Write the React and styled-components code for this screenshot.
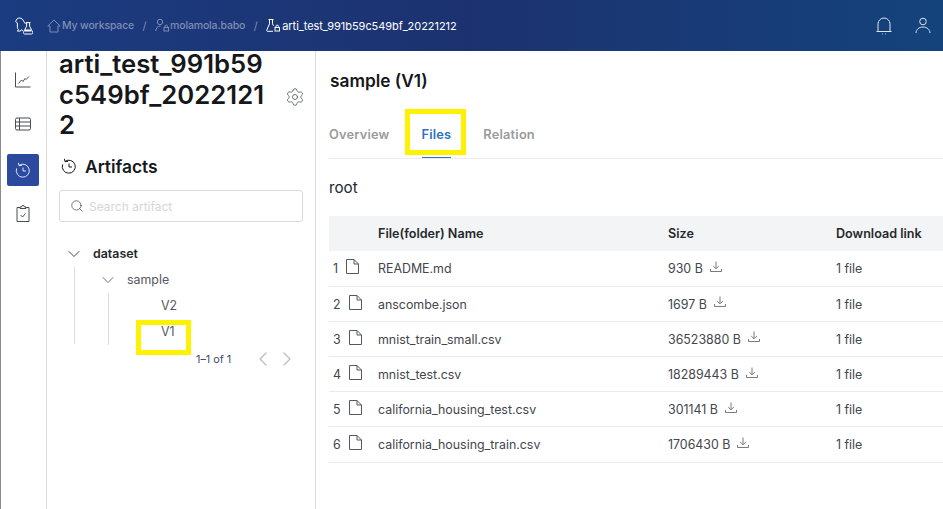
import React from "react";
import styled, { createGlobalStyle } from "styled-components";
import { ChevronDown, ChevronLeft, ChevronRight, Search, Settings } from "lucide-react";

const Global = createGlobalStyle`
  html, body { margin: 0; padding: 0; background: #fff; }
  body { font-family: Inter, "Noto Sans", sans-serif; color: #16171a; }
  * { box-sizing: border-box; }
`;

const Page = styled.div`
  width: 943px; height: 509px; overflow: hidden; display: flex; flex-direction: column; background: #fff;
`;
const Header = styled.header`
  height: 51px; flex: none; display: flex; align-items: center; padding: 0 12px 0 15px;
  background: linear-gradient(90deg, #1b3c80 0%, #1c3270 50%, #14437c 100%);
`;
const Crumbs = styled.nav`
  display: flex; align-items: center; margin-left: 14px; flex: 1;
`;
const Crumb = styled.span`
  display: flex; align-items: center; gap: ${p => (p.$current ? "2px" : "1px")}; color: ${p => (p.$current ? "#fff" : "#7f8db3")};
  font-weight: ${p => (p.$current ? 400 : 500)}; font-size: ${p => (p.$current ? "11px" : "10.5px")};
  letter-spacing: ${p => (p.$current ? "-0.05px" : "-0.15px")};
`;
const Sep = styled.span`
  color: #7f8db3; margin: 0 8.5px; font-size: 11px;
`;
const HeaderIcons = styled.div`
  display: flex; align-items: center; gap: 23px; color: #dfe4ee;
`;
const Body = styled.div`
  flex: 1; display: flex; min-height: 0; border-left: 1px solid #8b8b8b;
`;
const Rail = styled.aside`
  width: 46px; flex: none; border-right: 1px solid #dcdcdc; display: flex; flex-direction: column; align-items: center; padding: 13px 1px 0 0; gap: 12px;
`;
const RailButton = styled.div`
  width: 32px; height: 32px; border-radius: 2px; display: flex; align-items: center; justify-content: center;
  color: ${p => (p.$active ? "#dfe6f5" : "#4a4d55")}; background: ${p => (p.$active ? "#2b4a9f" : "transparent")};
  ${p => p.$active && `margin: 2px 0 -1px;`}
`;
const Side = styled.section`
  width: 269px; flex: none; border-right: 1px solid #dcdcdc; padding: 0 12px; position: relative;
`;
const TitleRow = styled.div`
  display: flex; align-items: center; justify-content: space-between; margin-top: -2px;
`;
const Title = styled.h1`
  margin: 0; width: 212px; font-size: 25.7px; line-height: 30.7px; font-weight: 600; word-break: break-all; color: #16171a;
`;
const GearWrap = styled.div`
  color: #55585f; display: flex; margin: 4px -2px 0 0;
`;
const SectionHead = styled.div`
  display: flex; align-items: center; gap: 8px; margin-top: 13px; padding-left: 2px; font-size: 17.4px; font-weight: 600; height: 24px;
`;
const SearchBox = styled.div`
  margin-top: 12px; height: 32px; width: 244px; border: 1px solid #d9d9d9; border-radius: 3px; display: flex; align-items: center; padding: 0 10px; gap: 5px; color: #40434a;
`;
const SearchText = styled.span`
  font-size: 12px; color: #d6d6d6;
`;
const Tree = styled.ul`
  list-style: none; margin: 19px 0 0; padding: 0; position: relative; font-size: 12.4px;
`;
const TreeRow = styled.li`
  height: 25.7px; display: flex; align-items: center; padding-left: ${p => p.$indent}px; gap: ${p => p.$gap || 8}px;
  color: ${p => p.$color || "#55585f"}; font-weight: ${p => p.$bold ? 600 : 400};
`;
const Guide = styled.span`
  position: absolute; width: 1px; background: #dcdcdc; left: ${p => p.$left}px; top: ${p => p.$top}px; height: ${p => p.$h}px;
`;
const Pager = styled.div`
  display: flex; align-items: center; position: absolute; left: 149px; top: 296px; height: 24px; font-size: 10.8px; color: #3b4a6b;
`;
const PagerArrows = styled.div`
  display: flex; gap: 0; margin-left: 20px; color: #bdbdbd; align-items: center;
`;
const Main = styled.main`
  flex: 1; min-width: 0; padding: 0 0 0 13px; position: relative; overflow: hidden;
`;
const MainTitle = styled.h2`
  margin: 19px 0 0 1px; font-size: 17.3px; line-height: 22px; font-weight: 600;
`;
const Tabs = styled.div`
  margin-top: 22px; height: 45px; border-bottom: 1px solid #ebebeb; display: flex; gap: 32px; width: 700px;
`;
const Tab = styled.div`
  font-size: 12.8px; font-weight: 600; padding-top: 13px; position: relative; letter-spacing: 0.2px;
  color: ${p => (p.$active ? "#2f6fc4" : "#9a9a9a")};
  ${p => p.$active && `border-bottom: 1px solid #2f6fc4;`}
`;
const Root = styled.div`
  margin-top: 19px; height: 20px; font-size: 15.2px; line-height: 20px; color: #26282d;
`;
const Table = styled.div`
  margin-top: 18.4px; width: 700px; font-size: 12.4px;
`;
const HeadRow = styled.div`
  height: 35px; background: #f3f4f6; display: grid; grid-template-columns: 49px 290px 168px 1fr; align-items: center; font-weight: 600; color: #26282d; font-size: 12.6px;
`;
const Row = styled.div`
  height: 35.2px; padding-top: 1px; border-bottom: 1px solid #ebebeb; display: grid; grid-template-columns: 49px 290px 168px 1fr; align-items: center; color: #43464d;
`;
const IndexCell = styled.div`
  display: flex; align-items: center; gap: 8px; padding-left: 4px; color: #43464d;
`;
const FileIcon = styled.svg`
  margin-top: -4px; color: #55585f;
`;
const SizeCell = styled.div`
  display: flex; align-items: center; gap: 7px;
`;
const DlIcon = styled.svg`
  color: #7a7a7a; margin-top: -4px;
`;
const Highlight = styled.div`
  position: absolute; border: 5px solid #fff200; pointer-events: none;
  left: ${p => p.$x}px; top: ${p => p.$y}px; width: ${p => p.$w}px; height: ${p => p.$h}px;
`;

const Logo = () => (
  <svg width="18" height="18" viewBox="0 0 18 18" fill="none" stroke="#fff" strokeWidth="1">
    <path d="M.8 4.500C1 2.300 2.600 1 4.500 1c2.200 0 3.400 1.400 4.300 3.400.5 1 1 1.800 1.600 2.400M.8 4.500c.2 1 .9 1.300 1.600 1.400M2.400 6v4.300c0 1.100.4 1.800 1 2.200l-1 1.600h3l1-1.400 1.500 1.200" />
    <path d="M10.600 5.600h4.800M11.600 5.600v3.600L8.600 15c-.4.900 0 2 1 2h7c1 0 1.400-1.100 1-2l-3-5.800V5.600" />
    <path d="M9.800 13.500h6.400" strokeWidth="2" />
  </svg>
);
const Home = () => (
  <svg width="14" height="14" viewBox="0 0 14 14" fill="none" stroke="#7f8db3" strokeWidth="1">
    <path d="M7 1 .8 7h2.200v6h8V7h2.200z" />
  </svg>
);
const Lock = () => (
  <>
    <rect x="9" y="9.500" width="4.500" height="3.500" />
    <path d="M10 9.500V8.300a1.200 1.200 0 0 1 2.400 0v1.200" />
  </>
);
const FlaskLock = () => (
  <svg width="14" height="15" viewBox="0 0 14 15" fill="none" stroke="#fff" strokeWidth="1">
    <path d="M2.500 1.500h5M3.500 1.500v4.300L.8 12c-.3.700 0 1.300.7 1.300h5.500M6.500 1.500v4.300l1 2" />
    <Lock />
  </svg>
);
const UserLock = () => (
  <svg width="14" height="15" viewBox="0 0 14 15" fill="none" stroke="#7f8db3" strokeWidth="1">
    <circle cx="5" cy="4" r="2.700" />
    <path d="M.8 13c0-2.800 1.800-5 4.700-5" />
    <Lock />
  </svg>
);
const BellIcon = () => (
  <svg width="16" height="18" viewBox="0 0 16 18" fill="none" stroke="currentColor" strokeWidth="1">
    <path d="M2 14V7a6 6 0 0 1 12 0v7" />
    <path d="M.5 14.500h15" />
    <path d="M6.500 16.500v1M9.500 16.500v1" strokeWidth=".8" />
  </svg>
);
const UserIcon = () => (
  <svg width="16" height="17" viewBox="0 0 16 17" fill="none" stroke="currentColor" strokeWidth="1">
    <circle cx="8" cy="4.500" r="3.300" />
    <path d="M1 16c.3-3.600 3-6 7-6s6.700 2.400 7 6" />
  </svg>
);
const ChartIcon = () => (
  <svg width="16" height="16" viewBox="0 0 16 16" fill="none" stroke="currentColor" strokeWidth="1">
    <path d="M.5.500v14.500h15" />
    <path d="M3.500 11.500l3-3.500 1.500 1.500 2-3 1 1 3-3" />
  </svg>
);
const TableIcon = () => (
  <svg width="16" height="14" viewBox="0 0 16 14" fill="none" stroke="currentColor" strokeWidth="1">
    <rect x=".5" y="1" width="15" height="12" rx="1.500" />
    <path d="M.5 5h15M.5 9h15M4.500 1v12" />
  </svg>
);
const ClockIcon = ({ size = 16 }) => (
  <svg width={size} height={size} viewBox="0 0 16 16" fill="none" stroke="currentColor" strokeWidth="1">
    <path d="M4 3.400a6.500 6.500 0 1 1-2.300 3" />
    <path d="M3.400.8 4 3.700l3-.4" />
    <path d="M8 5.500V9h3" />
  </svg>
);
const ClipIcon = () => (
  <svg width="14" height="17" viewBox="0 0 14 17" fill="none" stroke="currentColor" strokeWidth="1">
    <path d="M4 2.500H1v14h12v-14h-3" />
    <path d="M4 3.500v-1.500h1.500a1.500 1.500 0 0 1 3 0H10v1.500z" />
    <path d="M4.500 10l2 2 3-3.500" />
  </svg>
);
const DocIcon = () => (
  <FileIcon width="13" height="15" viewBox="0 0 13 15" fill="none" stroke="currentColor" strokeWidth="1">
    <path d="M.5.500h7.500l4.500 4.500v9.500H.5z" />
    <path d="M8 .5V5h4.500" />
  </FileIcon>
);
const DownIcon = () => (
  <DlIcon width="12" height="12" viewBox="0 0 12 12" fill="none" stroke="currentColor" strokeWidth="1">
    <path d="M6 .5v7M3.200 5 6 7.800 8.800 5" />
    <path d="M.5 8v2.500h11V8" />
  </DlIcon>
);

const files = [
  ["README.md", "930 B"],
  ["anscombe.json", "1697 B"],
  ["mnist_train_small.csv", "36523880 B"],
  ["mnist_test.csv", "18289443 B"],
  ["california_housing_test.csv", "301141 B"],
  ["california_housing_train.csv", "1706430 B"],
];

export default function App() {
  return (
    <Page>
      <Global />
      <Header>
        <Logo />
        <Crumbs>
          <Crumb><Home />My workspace</Crumb>
          <Sep>/</Sep>
          <Crumb><UserLock />molamola.babo</Crumb>
          <Sep>/</Sep>
          <Crumb $current><FlaskLock />arti_test_991b59c549bf_20221212</Crumb>
        </Crumbs>
        <HeaderIcons>
          <BellIcon />
          <UserIcon />
        </HeaderIcons>
      </Header>
      <Body>
        <Rail>
          <RailButton><ChartIcon /></RailButton>
          <RailButton><TableIcon /></RailButton>
          <RailButton $active><ClockIcon /></RailButton>
          <RailButton><ClipIcon /></RailButton>
        </Rail>
        <Side>
          <TitleRow>
            <Title>arti_test_991b59c549bf_20221212</Title>
            <GearWrap><Settings size={20} strokeWidth={1} /></GearWrap>
          </TitleRow>
          <SectionHead><ClockIcon />Artifacts</SectionHead>
          <SearchBox><Search size={14} strokeWidth={1.2} /><SearchText>Search artifact</SearchText></SearchBox>
          <Tree>
            <TreeRow $indent={5} $bold $color="#26282d" $gap={9}><ChevronDown size={20} strokeWidth={1} />dataset</TreeRow>
            <TreeRow $indent={39} $gap={9}><ChevronDown size={20} strokeWidth={1} />sample</TreeRow>
            <TreeRow $indent={102}>V2</TreeRow>
            <TreeRow $indent={102}>V1</TreeRow>
            <Guide $left={15} $top={26} $h={77} />
            <Guide $left={49} $top={52} $h={52} />
          </Tree>
          <Highlight $x={89} $y={269} $w={55} $h={35} />
          <Pager>
            1–1 of 1
            <PagerArrows><ChevronLeft size={24} strokeWidth={1.3} /><ChevronRight size={24} strokeWidth={1.3} /></PagerArrows>
          </Pager>
        </Side>
        <Main>
          <MainTitle>sample (V1)</MainTitle>
          <Tabs>
            <Tab>Overview</Tab>
            <Tab $active>Files</Tab>
            <Tab>Relation</Tab>
          </Tabs>
          <Root>root</Root>
          <Table>
            <HeadRow><div /><div>File(folder) Name</div><div>Size</div><div>Download link</div></HeadRow>
            {files.map(([name, size], i) => (
              <Row key={name}>
                <IndexCell>{i + 1}<DocIcon /></IndexCell>
                <div>{name}</div>
                <SizeCell>{size}<DownIcon /></SizeCell>
                <div>1 file</div>
              </Row>
            ))}
          </Table>
          <Highlight $x={89} $y={58} $w={61} $h={46} />
        </Main>
      </Body>
    </Page>
  );
}
